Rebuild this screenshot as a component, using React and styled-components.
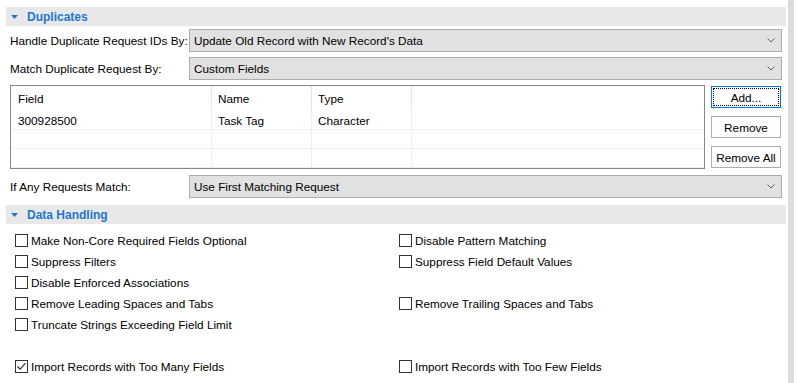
import styled, { createGlobalStyle } from "styled-components";

const GlobalStyle = createGlobalStyle`
  html, body {
    margin: 0;
    padding: 0;
    background: #ffffff;
  }
  body {
    font-family: "Liberation Sans", Arial, sans-serif;
    font-size: 11.75px;
    color: #000000;
  }
`;

const Page = styled.div`
  display: flex;
  width: 797px;
  height: 383px;
  overflow: hidden;
`;

const Main = styled.div`
  width: 780px;
  margin-left: 6px;
  padding-top: 7px;
  display: flex;
  flex-direction: column;
`;

const ScrollStrip = styled.div`
  width: 6px;
  margin-left: 2px;
  background: #dcdcdc;
`;

const SectionHeader = styled.div`
  height: 19px;
  background: #e8e8e8;
  display: flex;
  align-items: center;
  gap: 9px;
  padding-left: 5px;
  color: #1f77d0;
  font-weight: bold;
  font-size: 12px;
  margin-top: ${(p) => p.$top || 0}px;
`;

const FormRow = styled.div`
  display: flex;
  align-items: center;
  padding-left: 4px;
  padding-right: 4px;
  margin-top: ${(p) => p.$top}px;
`;

const Label = styled.div`
  width: 179px;
  flex-shrink: 0;
  white-space: nowrap;
`;

const Combo = styled.div`
  flex: 1;
  min-width: 0;
  height: 21px;
  border: 1px solid #adadad;
  background: #e1e1e1;
  display: flex;
  align-items: center;
  justify-content: space-between;
  padding: 0 6px 0 4px;
  white-space: nowrap;
`;

const TableArea = styled.div`
  display: flex;
  gap: 6px;
  padding-left: 4px;
  padding-right: 5px;
  margin-top: 5px;
`;

const Table = styled.div`
  width: 693px;
  height: 82px;
  border: 1px solid #828790;
  display: grid;
  grid-template-columns: 201px 100px 100px 1fr;
  grid-template-rows: 25px 19px 19px 19px;
  align-content: start;
`;

const Cell = styled.div`
  display: flex;
  align-items: center;
  padding-left: ${(p) => (p.$first ? 7 : 6)}px;
  border-right: ${(p) => (p.$last ? "none" : `1px solid ${p.$head ? "#e5e5e5" : "#f0f0f0"}`)};
  border-bottom: ${(p) => (p.$line ? "1px solid #f0f0f0" : "none")};
  box-sizing: border-box;
`;

const Buttons = styled.div`
  display: flex;
  flex-direction: column;
  gap: 8px;
  margin-top: 1px;
`;

const Button = styled.div`
  width: 70px;
  height: 22px;
  box-sizing: border-box;
  border: 1px solid ${(p) => (p.$focus ? "#0078d7" : "#adadad")};
  background: #fdfdfd;
  display: flex;
  align-items: center;
  justify-content: center;
  position: relative;
  white-space: nowrap;
  &::after {
    content: "";
    display: ${(p) => (p.$focus ? "block" : "none")};
    position: absolute;
    inset: 1px;
    border: 1px dotted #000;
  }
`;

const CheckGrid = styled.div`
  display: grid;
  grid-template-columns: 384px 1fr;
  grid-auto-rows: 21px;
  padding-left: 9px;
  padding-top: 6px;
`;

const CheckItem = styled.div`
  display: flex;
  align-items: center;
  gap: 3px;
  white-space: nowrap;
`;

const Box = styled.div`
  width: 13px;
  height: 13px;
  box-sizing: border-box;
  border: 1px solid #333333;
  background: #fff;
  display: flex;
  align-items: center;
  justify-content: center;
`;

function Triangle() {
  return (
    <svg width="7" height="4" viewBox="0 0 7 4">
      <path d="M0 0 L7 0 L3.5 4 Z" fill="#1f77d0" />
    </svg>
  );
}

function Chevron() {
  return (
    <svg width="8" height="5" viewBox="0 0 8 5">
      <path d="M0.5 0.5 L4 4 L7.5 0.5" fill="none" stroke="#606060" strokeWidth="1" />
    </svg>
  );
}

function Check({ label, checked }) {
  if (!label) return <div />;
  return (
    <CheckItem>
      <Box>
        {checked && (
          <svg width="11" height="11" viewBox="0 0 11 11">
            <path d="M1.5 5.5 L4.2 8.2 L9.5 2.2" fill="none" stroke="#333" strokeWidth="1.2" />
          </svg>
        )}
      </Box>
      {label}
    </CheckItem>
  );
}

const rows = [
  ["Field", "Name", "Type", ""],
  ["300928500", "Task Tag", "Character", ""],
  ["", "", "", ""],
  ["", "", "", ""],
];

const checks = [
  ["Make Non-Core Required Fields Optional", "Disable Pattern Matching"],
  ["Suppress Filters", "Suppress Field Default Values"],
  ["Disable Enforced Associations", ""],
  ["Remove Leading Spaces and Tabs", "Remove Trailing Spaces and Tabs"],
  ["Truncate Strings Exceeding Field Limit", ""],
  ["", ""],
  ["Import Records with Too Many Fields", "Import Records with Too Few Fields"],
];

export default function App() {
  return (
    <>
      <GlobalStyle />
      <Page>
        <Main>
          <SectionHeader>
            <Triangle />
            Duplicates
          </SectionHeader>
          <FormRow $top={3}>
            <Label>Handle Duplicate Request IDs By:</Label>
            <Combo>
              Update Old Record with New Record's Data
              <Chevron />
            </Combo>
          </FormRow>
          <FormRow $top={5}>
            <Label>Match Duplicate Request By:</Label>
            <Combo>
              Custom Fields
              <Chevron />
            </Combo>
          </FormRow>
          <TableArea>
            <Table>
              {rows.map((r, i) =>
                r.map((c, j) => (
                  <Cell
                    key={`${i}-${j}`}
                    $first={j === 0}
                    $last={j === 3}
                    $head={i === 0}
                    $line={i >= 1}
                  >
                    {c}
                  </Cell>
                ))
              )}
            </Table>
            <Buttons>
              <Button $focus>Add...</Button>
              <Button>Remove</Button>
              <Button>Remove All</Button>
            </Buttons>
          </TableArea>
          <FormRow $top={6}>
            <Label>If Any Requests Match:</Label>
            <Combo>
              Use First Matching Request
              <Chevron />
            </Combo>
          </FormRow>
          <SectionHeader $top={7}>
            <Triangle />
            Data Handling
          </SectionHeader>
          <CheckGrid>
            {checks.map(([a, b], i) => [
              <Check key={`a${i}`} label={a} checked={i === 6} />,
              <Check key={`b${i}`} label={b} />,
            ])}
          </CheckGrid>
        </Main>
        <ScrollStrip />
      </Page>
    </>
  );
}
